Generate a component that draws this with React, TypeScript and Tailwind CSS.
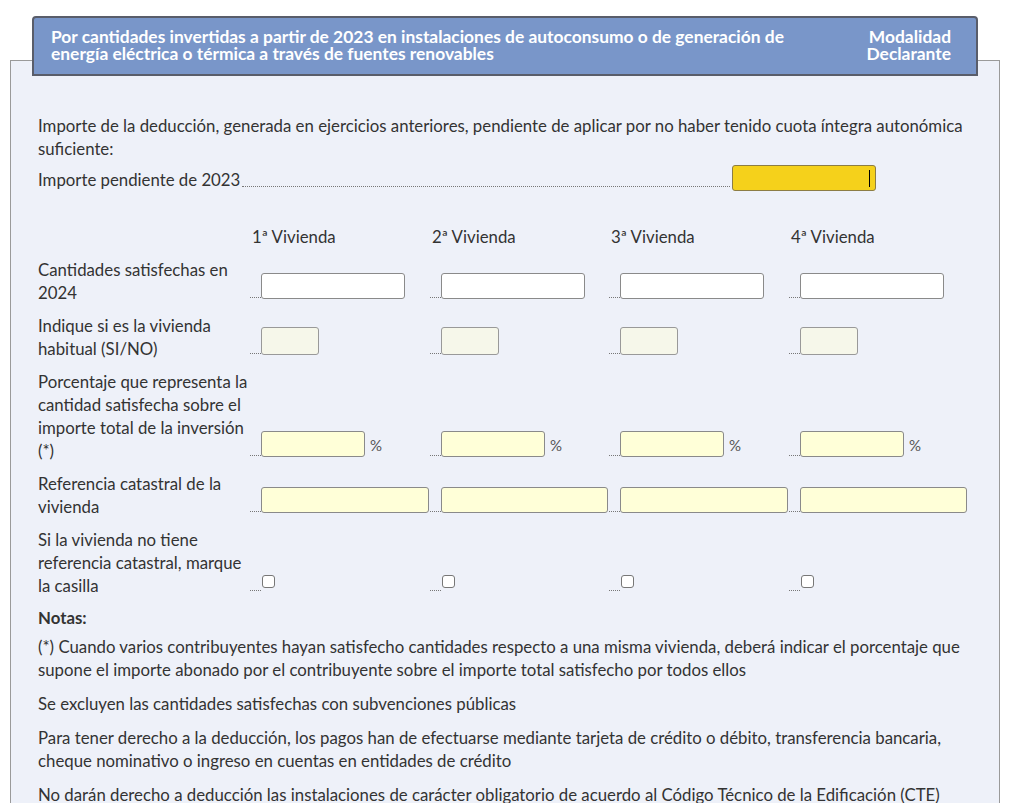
import React from 'react';

const cols = ['1ª', '2ª', '3ª', '4ª'];

const Leader = () => <span className="w-[11px] shrink-0 border-b border-dotted border-[#777] mb-[1px]" />;

const Row = ({ label, children }: { label: React.ReactNode, children: (i: number) => React.ReactNode }) => (
    <>
        <div className="whitespace-nowrap">{label}</div>
        {cols.map((c, i) => (
            <div key={c} className="flex items-end pb-[5px]">
                <Leader />
                {children(i)}
            </div>
        ))}
    </>
);

const App: React.FC = () => {
    return (
        <div className="w-[1024px] h-[803px] overflow-hidden bg-white text-[#333] text-[16.8px] leading-[23px]" style={{ fontFamily: 'Lato, "Liberation Sans", sans-serif' }}>
            <div className="pt-4 ml-[10px] w-[990px]">
                {/* title bar */}
                <div className="relative z-10 mx-[22px] h-[60px] bg-[#7996c9] border-2 border-[#595d6a] rounded-t-[4px] flex justify-between pl-[17px] pr-[25px] pt-[10px] text-white font-bold text-[17.4px] leading-[17px]">
                    <div className="w-[745px]">Por cantidades invertidas a partir de 2023 en instalaciones de autoconsumo o de generación de energía eléctrica o térmica a través de fuentes renovables</div>
                    <div className="text-right">Modalidad<br />Declarante</div>
                </div>

                <div className="-mt-[16px] border border-[#9a9a9a] bg-[#eef1f9] pl-[27px] pr-4 pt-[53px] pb-10">
                    <p>Importe de la deducción, generada en ejercicios anteriores, pendiente de aplicar por no haber tenido cuota íntegra autonómica suficiente:</p>

                    <div className="mt-[5px] flex items-end w-[838px]">
                        <span>Importe pendiente de 2023</span>
                        <span className="flex-1 mx-[2px] mb-[4px] border-b border-dotted border-[#777]" />
                        <div className="w-[144px] h-[26px] bg-[#f5d11b] border border-[#8c7d45] rounded-[3px] flex justify-end items-center pr-[5px]">
                            <span className="w-px h-[17px] bg-black" />
                        </div>
                    </div>

                    <div className="mt-[34px] grid grid-cols-[212px_180px_179px_180px_179px] gap-y-[10px]">
                        <div />
                        {cols.map(c => (
                            <div key={c} className="pl-[2px]">{c} Vivienda</div>
                        ))}

                        <Row label={<>Cantidades satisfechas en<br />2024</>}>
                            {() => <div className="w-[144px] h-[26px] bg-white border border-[#8a8a8a] rounded-[3px]" />}
                        </Row>

                        <Row label={<>Indique si es la vivienda<br />habitual (SI/NO)</>}>
                            {() => <div className="w-[58px] h-[28px] bg-[#f6f7ea] border border-[#999] rounded-[3px]" />}
                        </Row>

                        <Row label={<>Porcentaje que representa la<br />cantidad satisfecha sobre el<br />importe total de la inversión<br />(*)</>}>
                            {() => (
                                <div className="flex items-center">
                                    <div className="w-[104px] h-[26px] bg-[#ffffd8] border border-[#8a8a8a] rounded-[3px]" />
                                    <span className="ml-[5px] mt-[4px] text-[15px] text-[#555]">%</span>
                                </div>
                            )}
                        </Row>

                        <Row label={<>Referencia catastral de la<br />vivienda</>}>
                            {(i) => <div className={`${i % 2 ? 'w-[167px]' : 'w-[168px]'} h-[26px] bg-[#ffffd8] border border-[#8a8a8a] rounded-[3px]`} />}
                        </Row>

                        <Row label={<>Si la vivienda no tiene<br />referencia catastral, marque<br />la casilla</>}>
                            {() => <div className="w-[13px] h-[13px] mb-[4px] ml-[1px] bg-white border border-[#777] rounded-[3px]" />}
                        </Row>
                    </div>

                    <p className="mt-[9px] font-bold">Notas:</p>
                    <div className="mt-[6px] flex flex-col gap-[11px]">
                        <p>(*) Cuando varios contribuyentes hayan satisfecho cantidades respecto a una misma vivienda, deberá indicar el porcentaje que supone el importe abonado por el contribuyente sobre el importe total satisfecho por todos ellos</p>
                        <p>Se excluyen las cantidades satisfechas con subvenciones públicas</p>
                        <p>Para tener derecho a la deducción, los pagos han de efectuarse mediante tarjeta de crédito o débito, transferencia bancaria, cheque nominativo o ingreso en cuentas en entidades de crédito</p>
                        <p>No darán derecho a deducción las instalaciones de carácter obligatorio de acuerdo al Código Técnico de la Edificación (CTE)</p>
                    </div>
                </div>
            </div>
        </div>
    );
};

export default App;
